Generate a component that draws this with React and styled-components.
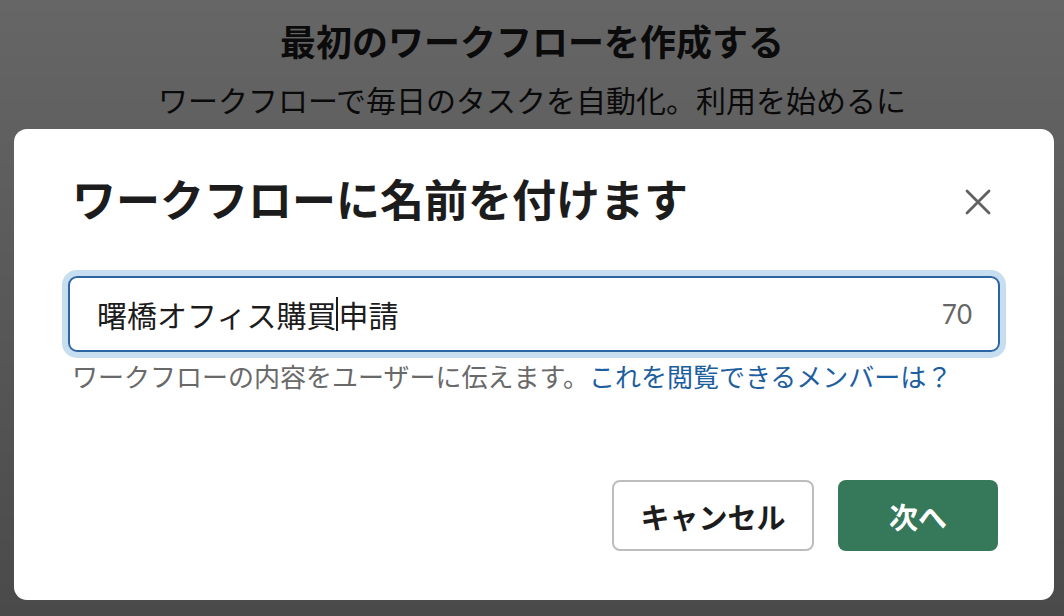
import React from "react";
import styled, { createGlobalStyle } from "styled-components";

const Global = createGlobalStyle`
  html, body { margin: 0; padding: 0; }
  body {
    width: 1064px;
    height: 616px;
    overflow: hidden;
    background: #ffffff;
    font-family: "Noto Sans CJK JP", "Noto Sans", sans-serif;
  }
`;

const Page = styled.div`
  display: flex;
  flex-direction: column;
  align-items: center;
  padding-top: 17px;
  color: #1d1c1d;
`;

const PageTitle = styled.h1`
  margin: 0;
  font-size: 36px;
  font-weight: 700;
  line-height: 1.3;
`;

const PageLead = styled.p`
  margin: 14px 0 0;
  width: 760px;
  text-align: center;
  font-size: 30px;
  line-height: 1.45;
  font-weight: 400;
`;

const Backdrop = styled.div`
  position: fixed;
  inset: 0;
  background: linear-gradient(180deg, rgba(0, 0, 0, 0.6) 0%, rgba(0, 0, 0, 0.71) 100%);
  display: flex;
  align-items: flex-start;
  justify-content: flex-start;
  padding: 129px 0 0 14px;
`;

const Modal = styled.div`
  width: 1040px;
  box-sizing: border-box;
  height: 471px;
  background: #ffffff;
  border-radius: 13px;
  padding: 38px 54px 49px;
  display: flex;
  flex-direction: column;
`;

const Header = styled.div`
  display: flex;
  align-items: center;
  justify-content: space-between;
`;

const Title = styled.h2`
  margin: 0 0 0 4px;
  font-size: 44px;
  line-height: 62px;
  font-weight: 700;
  color: #1d1c1d;
`;

const CloseButton = styled.button`
  width: 40px;
  height: 40px;
  margin-right: 2px;
  margin-top: 8px;
  border: none;
  background: transparent;
  padding: 0;
  display: flex;
  align-items: center;
  justify-content: center;
  color: #616161;
`;

const Field = styled.div`
  margin-top: 47px;
  height: 76px;
  box-sizing: border-box;
  border: 2px solid #2c64a4;
  border-radius: 9px;
  box-shadow: 0 0 0 6px #c6def0;
  display: flex;
  align-items: center;
  padding: 0 26px 0 27px;
`;

const Value = styled.div`
  flex: 1;
  font-size: 30px;
  color: #1d1c1d;
  display: flex;
  align-items: center;
  line-height: 1;
`;

const Caret = styled.span`
  display: inline-block;
  width: 2px;
  height: 34px;
  background: #1d1c1d;
`;

const Counter = styled.span`
  font-family: "Lato", "Noto Sans", sans-serif;
  font-size: 26px;
  color: #666666;
`;

const Hint = styled.p`
  margin: 6px 0 0 4px;
  font-size: 26px;
  line-height: 36px;
  color: #696969;
`;

const HintLink = styled.a`
  color: #1d5e9f;
  text-decoration: none;
`;

const Footer = styled.div`
  margin-top: auto;
  display: flex;
  justify-content: flex-end;
  gap: 24px;
  padding-right: 2px;
`;

const Button = styled.button`
  height: 71px;
  box-sizing: border-box;
  width: ${(p) => p.$w}px;
  border-radius: 8px;
  font-family: "Noto Sans CJK JP", "Noto Sans", sans-serif;
  font-weight: 700;
  font-size: 29px;
  padding: 0;
  border: ${(p) => (p.$primary ? "none" : "2px solid #bdbdbd")};
  background: ${(p) => (p.$primary ? "#35785a" : "#ffffff")};
  color: ${(p) => (p.$primary ? "#ffffff" : "#1d1c1d")};
`;

export default function App() {
  return (
    <>
      <Global />
      <Page>
        <PageTitle>最初のワークフローを作成する</PageTitle>
        <PageLead>
          ワークフローで毎日のタスクを自動化。利用を始めるには、テンプレートを選択してください。
        </PageLead>
      </Page>
      <Backdrop>
        <Modal>
          <Header>
            <Title>ワークフローに名前を付けます</Title>
            <CloseButton aria-label="閉じる">
              <svg width="26" height="26" viewBox="0 0 26 26">
                <path
                  d="M2 2 L24 24 M24 2 L2 24"
                  stroke="currentColor"
                  strokeWidth="2.8"
                  strokeLinecap="round"
                />
              </svg>
            </CloseButton>
          </Header>
          <Field>
            <Value>
              曙橋オフィス購買<Caret />申請
            </Value>
            <Counter>70</Counter>
          </Field>
          <Hint>
            ワークフローの内容をユーザーに伝えます。
            <HintLink href="#">これを閲覧できるメンバーは？</HintLink>
          </Hint>
          <Footer>
            <Button $w={202}>キャンセル</Button>
            <Button $w={160} $primary>
              次へ
            </Button>
          </Footer>
        </Modal>
      </Backdrop>
    </>
  );
}
